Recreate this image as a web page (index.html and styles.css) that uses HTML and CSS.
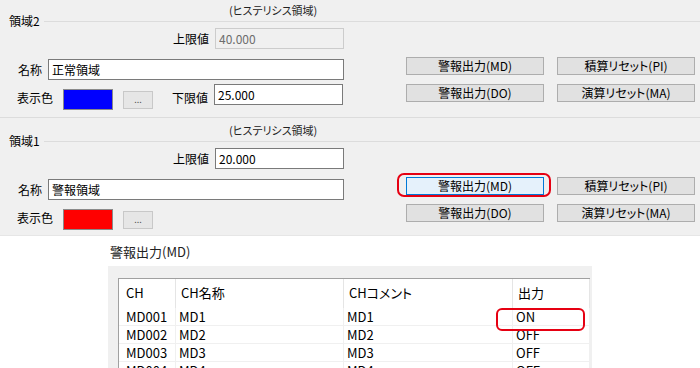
FILE: index.html
```html
<!DOCTYPE html>
<html lang="ja">

<head>
    <meta charset="UTF-8">
    <meta name="viewport" content="width=device-width, initial-scale=1.0">
    <title>警報出力設定</title>
    <link rel="stylesheet" href="styles.css">
</head>

<body>

    <div class="panel">
        <!-- 領域2 -->
        <section class="region">
            <div class="hys">(ヒステリシス領域)</div>
            <div class="group-title">領域2</div>
            <div class="region-body">
                <div class="form">
                    <div class="row row-top">
                        <label>上限値</label>
                        <input class="num" type="text" value="40.000" disabled>
                    </div>
                    <div class="row row-name">
                        <label>名称</label>
                        <input class="name" type="text" value="正常領域">
                    </div>
                    <div class="row row-color">
                        <label>表示色</label>
                        <span class="swatch blue"></span>
                        <button class="dots">...</button>
                        <label class="lower">下限値</label>
                        <input class="num" type="text" value="25.000">
                    </div>
                </div>
                <div class="buttons">
                    <button class="btn">警報出力(MD)</button>
                    <button class="btn">積算リセット(PI)</button>
                    <button class="btn">警報出力(DO)</button>
                    <button class="btn">演算リセット(MA)</button>
                </div>
            </div>
        </section>

        <!-- 領域1 -->
        <section class="region">
            <div class="hys">(ヒステリシス領域)</div>
            <div class="group-title">領域1</div>
            <div class="region-body">
                <div class="form">
                    <div class="row row-top">
                        <label>上限値</label>
                        <input class="num" type="text" value="20.000">
                    </div>
                    <div class="row row-name">
                        <label>名称</label>
                        <input class="name" type="text" value="警報領域">
                    </div>
                    <div class="row row-color">
                        <label>表示色</label>
                        <span class="swatch red"></span>
                        <button class="dots">...</button>
                    </div>
                </div>
                <div class="buttons">
                    <button class="btn focus marked">警報出力(MD)</button>
                    <button class="btn">積算リセット(PI)</button>
                    <button class="btn">警報出力(DO)</button>
                    <button class="btn">演算リセット(MA)</button>
                </div>
            </div>
        </section>
    </div>

    <div class="alarm">
        <div class="alarm-title">警報出力(MD)</div>
        <div class="list-box">
            <div class="list">
                <div class="list-row head">
                    <div class="cell">CH</div>
                    <div class="cell">CH名称</div>
                    <div class="cell">CHコメント</div>
                    <div class="cell">出力</div>
                </div>
                <div class="list-row">
                    <div class="cell">MD001</div>
                    <div class="cell">MD1</div>
                    <div class="cell">MD1</div>
                    <div class="cell marked-on">ON</div>
                </div>
                <div class="list-row">
                    <div class="cell">MD002</div>
                    <div class="cell">MD2</div>
                    <div class="cell">MD2</div>
                    <div class="cell">OFF</div>
                </div>
                <div class="list-row">
                    <div class="cell">MD003</div>
                    <div class="cell">MD3</div>
                    <div class="cell">MD3</div>
                    <div class="cell">OFF</div>
                </div>
                <div class="list-row">
                    <div class="cell">MD004</div>
                    <div class="cell">MD4</div>
                    <div class="cell">MD4</div>
                    <div class="cell">OFF</div>
                </div>
            </div>
        </div>
    </div>

</body>

</html>
```

FILE: styles.css
```css
* {
    padding: 0;
    margin: 0;
    box-sizing: border-box;
}

body {
    width: 700px;
    height: 368px;
    overflow: hidden;
    background-color: #fff;
    color: #000;
    font-family: "Noto Sans CJK JP", sans-serif;
    font-feature-settings: "palt";
    font-size: 12px;
    line-height: 14px;
}

input,
button {
    font-family: inherit;
    font-feature-settings: inherit;
    font-size: 12px;
    color: #000;
}

/* 上のパネル */
.panel {
    background-color: #f0f0f0;
    margin-top: -2px;
    height: 238px;
    overflow: hidden;
    border-bottom: 1px solid #e6e6e6;
}

.region {
    height: 120px;
    border-bottom: 1px solid #dcdcdc;
}

.hys {
    padding-top: 6px;
    padding-left: 229px;
    height: 18px;
    font-size: 11px;
    line-height: 12px;
    color: #222;
}

.group-title {
    display: flex;
    align-items: center;
    gap: 4px;
    height: 10px;
    padding-left: 9px;
    line-height: 10px;
}

.group-title::after {
    content: "";
    flex: 1;
    border-top: 1px solid #dcdcdc;
}

.region-body {
    display: flex;
}

.form {
    width: 344px;
}

.row {
    display: flex;
    align-items: center;
}

.row-top {
    justify-content: flex-end;
    margin-top: 2px;
}

.row-name {
    margin-top: 10px;
    padding-left: 18px;
}

.row-color {
    align-items: flex-start;
    margin-top: 4px;
    padding-left: 17px;
}

.row-color label {
    margin-top: 7px;
}

input {
    height: 21px;
    border: 1px solid #7a7a7a;
    background-color: #fff;
    padding-left: 3px;
    line-height: 19px;
}

input:disabled {
    background-color: #f0f0f0;
    border-color: #cccccc;
    color: #6d6d6d;
}

.num {
    width: 129px;
    margin-left: 6px;
}

.name {
    flex: 1;
    margin-left: 6px;
}

.swatch {
    display: block;
    width: 50px;
    height: 21px;
    margin-left: 10px;
    margin-top: 5px;
    border: 1px solid #8a8a8a;
}

.blue {
    background-color: #0000ff;
}

.red {
    background-color: #ff0000;
}

.dots {
    width: 30px;
    height: 18px;
    margin-left: 10px;
    margin-top: 7px;
    border: 1px solid #c8c8c8;
    background-color: #e6e6e6;
    color: #555;
    font-size: 9px;
    line-height: 12px;
}

.lower {
    margin-left: 19px;
}

.buttons {
    display: grid;
    grid-template-columns: 138px 138px;
    column-gap: 13px;
    row-gap: 9px;
    margin-left: 62px;
    margin-top: 31px;
    align-self: flex-start;
}

.btn {
    height: 18px;
    border: 1px solid #adadad;
    background-color: #e1e1e1;
    line-height: 16px;
}

.btn.focus {
    border-color: #0078d7;
    background-color: #e5f1fb;
}

.marked {
    position: relative;
}

.marked::after {
    content: "";
    position: absolute;
    left: -10px;
    right: -8px;
    top: -5px;
    bottom: -3px;
    border: 2px solid #e60012;
    border-radius: 7px;
}

/* 下の一覧 */
.alarm {
    padding-top: 8px;
    padding-left: 108px;
}

.alarm-title {
    padding-left: 2px;
    height: 16px;
    font-size: 13px;
    line-height: 16px;
    color: #222;
}

.list-box {
    width: 484px;
    height: 110px;
    margin-top: 6px;
    background-color: #f0f0f0;
    padding: 12px 2px 0 10px;
}

.list {
    height: 100%;
    background-color: #fff;
    border-top: 1px solid #a0a0a0;
    border-left: 1px solid #a0a0a0;
    font-size: 13px;
}

.list-row {
    display: grid;
    grid-template-columns: 57px 168px 169px 77px;
    height: 18px;
    line-height: 17px;
    border-bottom: 1px solid #f0f0f0;
}

.list-row.head {
    height: 29px;
    line-height: 28px;
    border-bottom: none;
}

.cell {
    padding-left: 3px;
    border-right: 1px solid #f0f0f0;
    white-space: nowrap;
    overflow: hidden;
}

.cell:first-child {
    padding-left: 7px;
}

.head .cell {
    padding-left: 5px;
    border-right-color: #e5e5e5;
}

.head .cell:first-child {
    padding-left: 7px;
}

.marked-on {
    position: relative;
    overflow: visible;
}

.marked-on::after {
    content: "";
    position: absolute;
    left: -17px;
    top: 0;
    width: 85px;
    height: 19px;
    border: 2px solid #e60012;
    border-radius: 6px;
}
```
